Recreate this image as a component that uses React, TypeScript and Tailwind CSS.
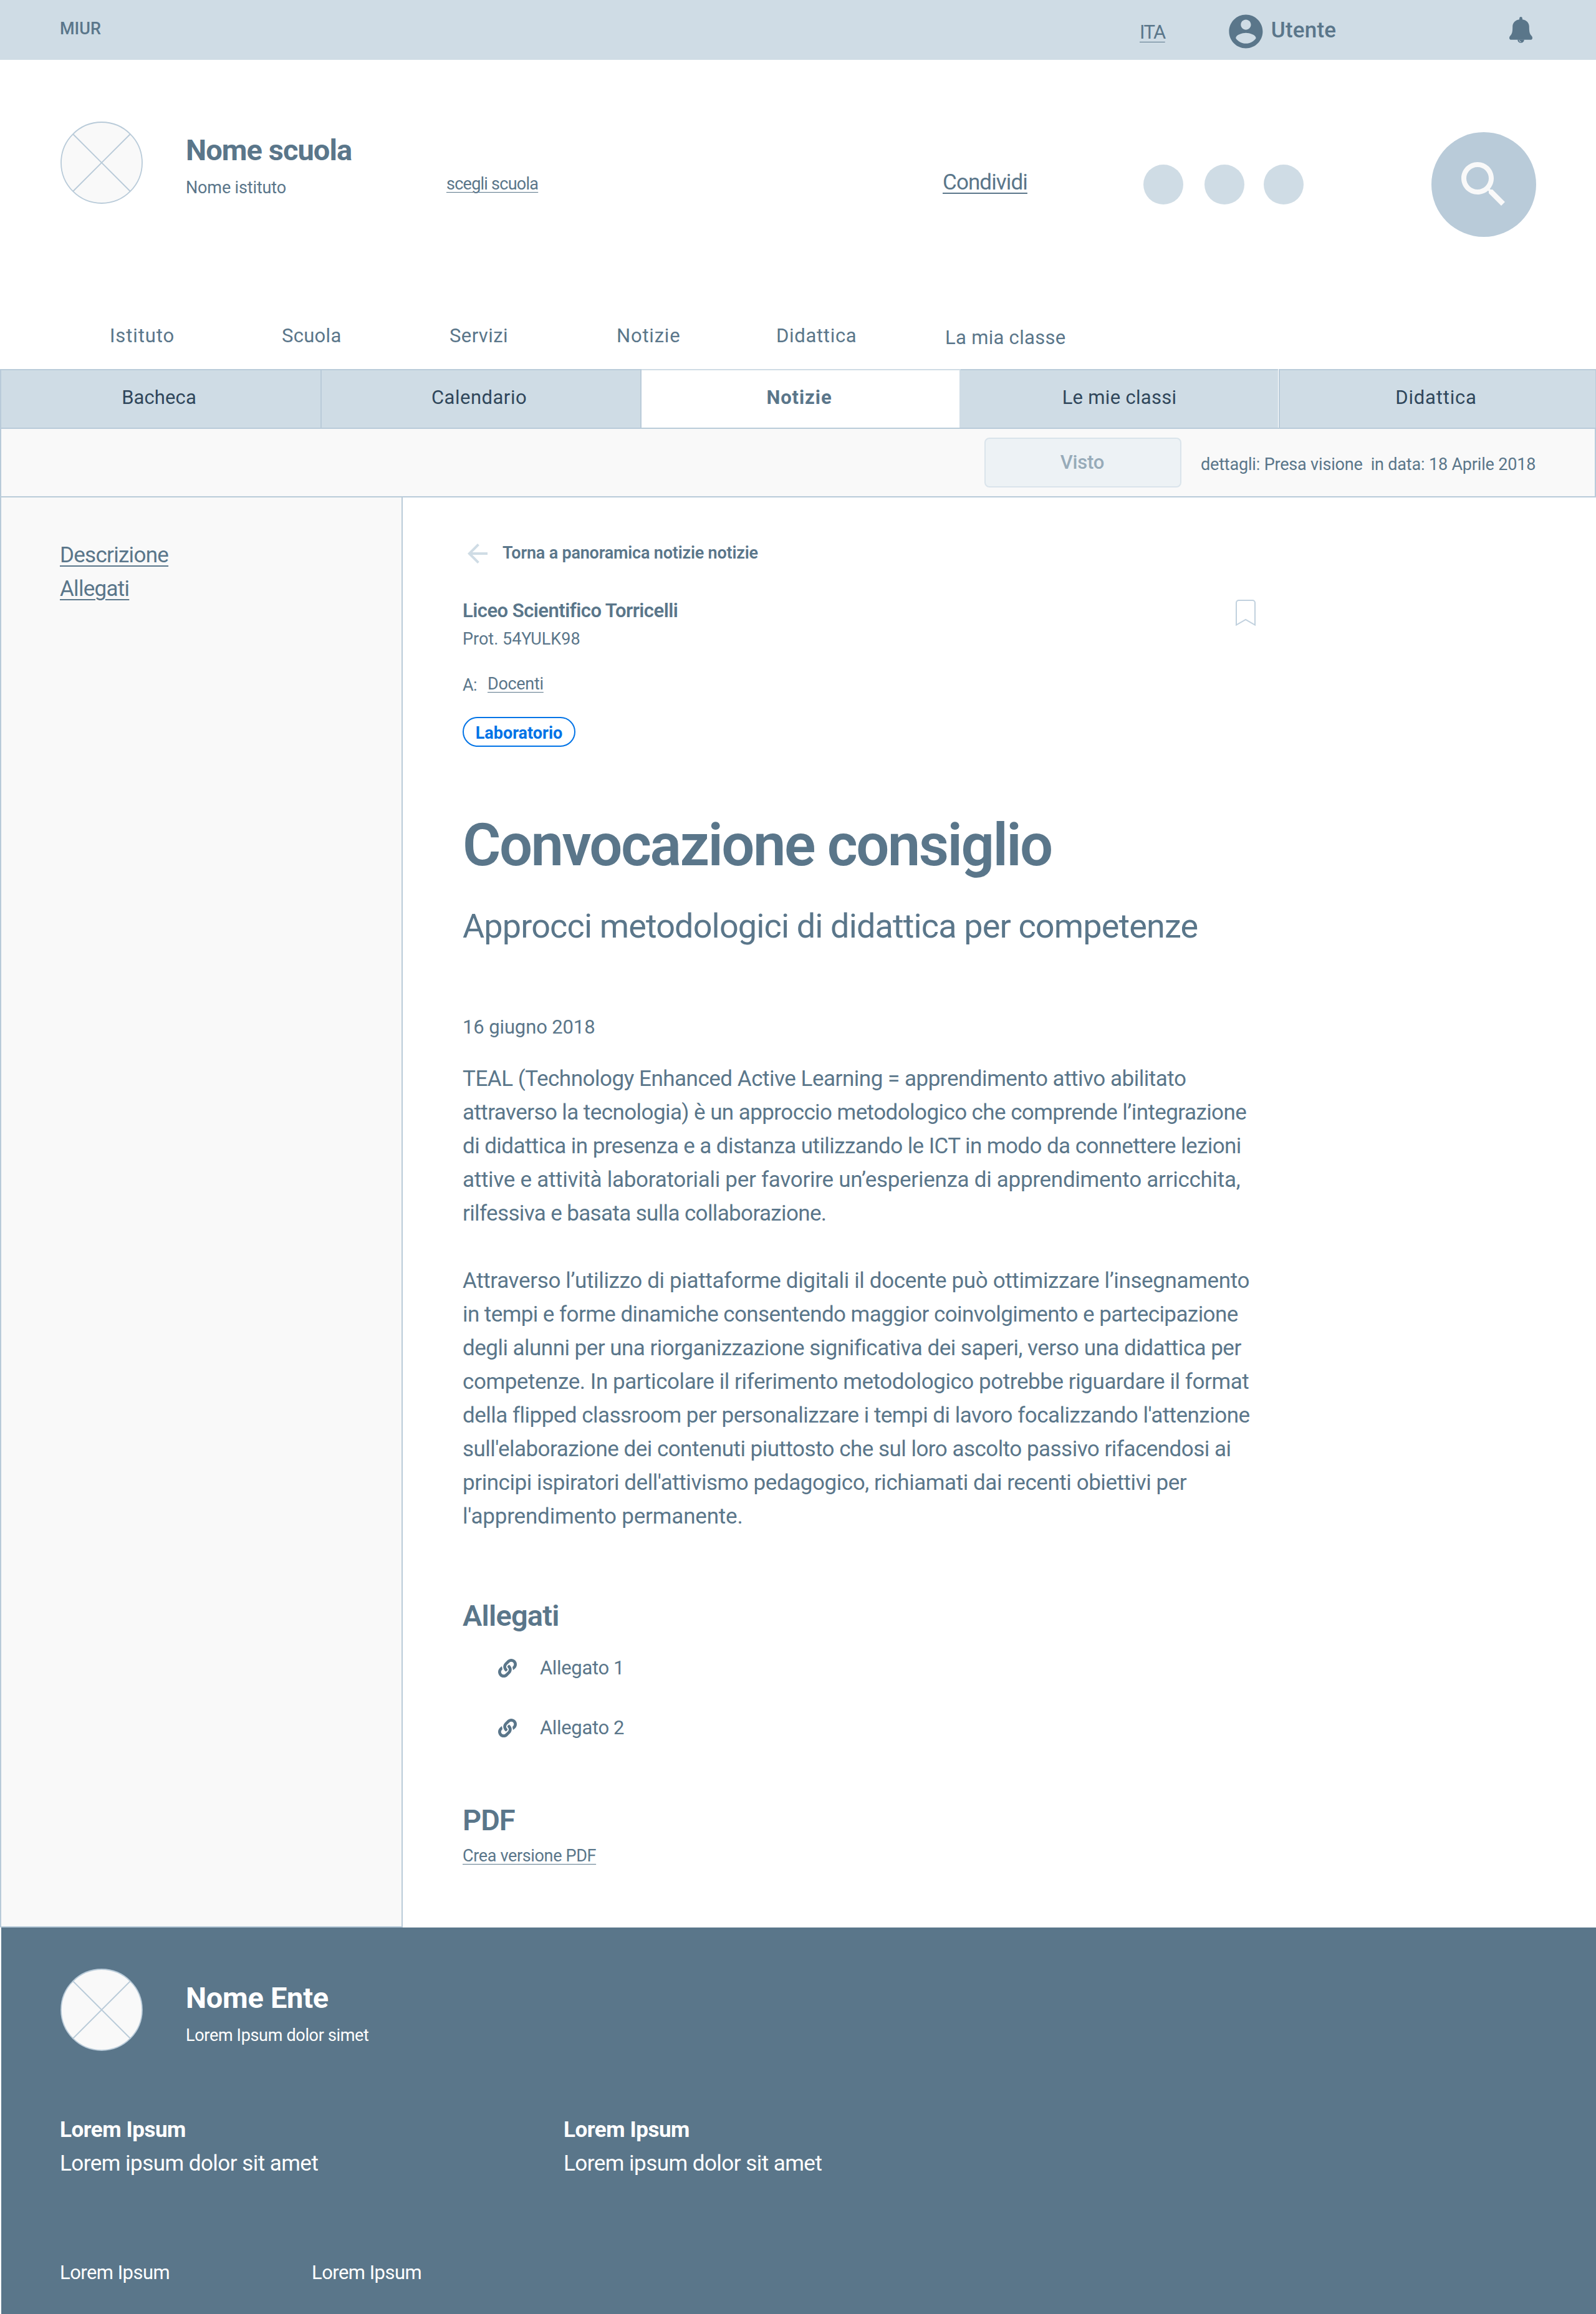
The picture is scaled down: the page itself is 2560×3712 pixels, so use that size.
import React from "react";
import { FaLink } from "react-icons/fa";

const ROBOTO = "font-['Roboto',sans-serif]";

function Placeholder() {
  return (
    <svg className="block h-[132px] w-[132px] shrink-0" viewBox="0 0 132 132" fill="none" stroke="#b9cbd9" strokeWidth="1.8">
      <circle cx="66" cy="66" r="65" fill="#f9f9f9" />
      <path d="M20 20L112 112M112 20L20 112" />
    </svg>
  );
}

function AccountIcon() {
  return (
    <svg className="block h-[64.8px] w-[64.8px] shrink-0" viewBox="0 0 24 24" fill="#5a768a">
      <path d="M12 2C6.48 2 2 6.48 2 12s4.48 10 10 10 10-4.48 10-10S17.52 2 12 2zm0 3c1.66 0 3 1.34 3 3s-1.34 3-3 3-3-1.34-3-3 1.34-3 3-3zm0 14.2c-2.5 0-4.71-1.28-6-3.22.03-1.99 4-3.08 6-3.08 1.99 0 5.97 1.09 6 3.08-1.29 1.94-3.5 3.22-6 3.22z" />
    </svg>
  );
}

function BellIcon() {
  return (
    <svg className="block h-[42px] w-[37px] shrink-0" viewBox="0 0 37 42" fill="#5a768a">
      <path d="M18.5 0c-1.500 0-2.400 1.300-2.400 2.800v1.500C9.500 5.300 5.200 9.800 5.200 15.500c0 8.500-.8 11.500-3.200 14.200C.7 31.200 0 32.400 0 33.900c0 1.700 1.200 2.900 2.800 2.900h31.400c1.600 0 2.800-1.200 2.800-2.900 0-1.500-.7-2.700-2-4.200-2.400-2.700-3.200-5.700-3.200-14.200 0-5.700-4.300-10.200-10.900-11.200V2.800C20.900 1.300 20 0 18.500 0z" />
      <path d="M13.200 36.500a5.300 5.300 0 0 0 10.600 0z" />
      <path d="M16 37.500a2.600 2.600 0 0 0 2.600 2.500" fill="none" stroke="#cfdce5" strokeWidth="1" />
    </svg>
  );
}

function SearchIcon() {
  return (
    <svg className="block h-24 w-24" viewBox="0 0 24 24" fill="#f9f9f9">
      <path d="M15.5 14h-.79l-.28-.27C15.41 12.59 16 11.11 16 9.5 16 5.91 13.09 3 9.5 3S3 5.91 3 9.5 5.91 16 9.5 16c1.61 0 3.09-.59 4.23-1.57l.27.28v.79l5 4.99L20.490 19l-4.990-5zm-6 0C7.010 14 5 11.990 5 9.500S7.010 5 9.500 5 14 7.010 14 9.500 11.990 14 9.500 14z" />
    </svg>
  );
}

function ArrowIcon() {
  return (
    <svg className="block h-12 w-12 shrink-0" viewBox="0 0 24 24" fill="#cfdce5">
      <path d="M20 11H7.830l5.590-5.590L12 4l-8 8 8 8 1.410-1.410L7.830 13H20v-2z" />
    </svg>
  );
}

function BookmarkIcon() {
  return (
    <svg className="mt-[5px] block h-[43px] w-8 shrink-0" viewBox="0 0 32 43" fill="none" stroke="#c1d1de" strokeWidth="2">
      <path d="M1 40.500V5a4 4 0 0 1 4-4h22a4 4 0 0 1 4 4v35.500L16 32z" />
    </svg>
  );
}

const navItems = [
  { label: "Istituto", cls: "w-[276px] tracking-[0.9px]" },
  { label: "Scuola", cls: "w-[269px] tracking-[0.3px]" },
  { label: "Servizi", cls: "w-[268px] tracking-[0.4px]" },
  { label: "Notizie", cls: "w-[256px] tracking-[0.8px]" },
  { label: "Didattica", cls: "w-[271px] tracking-[0.7px]" },
  { label: "La mia classe", cls: "mt-[3px] tracking-[0.3px]" },
];

const tabs = [
  { label: "Bacheca", cls: "w-[516px] border-x-2 border-[#b9cbd9] bg-[#cfdce5] text-[#30475b] pr-[6px] tracking-[0.1px]" },
  { label: "Calendario", cls: "w-[513px] border-r-2 border-[#b9cbd9] bg-[#cfdce5] text-[#30475b] pr-[6px] tracking-[0.5px]" },
  { label: "Notizie", cls: "w-[512px] border-r-2 border-[#cfdce5] bg-white font-bold text-[#5a768a] pr-[4px] tracking-[0.9px]" },
  { label: "Le mie classi", cls: "mr-px w-[509px] border-[#b9cbd9] bg-[#cfdce5] text-[#30475b] tracking-[0.3px]" },
  { label: "Didattica", cls: "w-[509px] border-l-2 border-r border-[#b9cbd9] bg-[#cfdce5] text-[#30475b] pr-[5px] tracking-[0.8px]" },
];

type Line = { text: string; cls: string };

const paragraphOne: Line[] = [
  { text: "TEAL (Technology Enhanced Active Learning = apprendimento attivo abilitato", cls: "tracking-[-0.480px]" },
  { text: "attraverso la tecnologia) è un approccio metodologico che comprende l’integrazione", cls: "tracking-[-0.580px]" },
  { text: "di didattica in presenza e a distanza utilizzando le ICT in modo da connettere lezioni", cls: "tracking-[-0.580px]" },
  { text: "attive e attività laboratoriali per favorire un’esperienza di apprendimento arricchita,", cls: "tracking-[-0.280px]" },
  { text: "rilfessiva e basata sulla collaborazione.", cls: "tracking-[-0.640px]" },
];

const paragraphTwo: Line[] = [
  { text: "Attraverso l’utilizzo di piattaforme digitali il docente può ottimizzare l’insegnamento", cls: "tracking-[-0.360px]" },
  { text: "in tempi e forme dinamiche consentendo maggior coinvolgimento e partecipazione", cls: "tracking-[-0.580px]" },
  { text: "degli alunni per una riorganizzazione significativa dei saperi, verso una didattica per", cls: "tracking-[-0.520px]" },
  { text: "competenze. In particolare il riferimento metodologico potrebbe riguardare il format", cls: "tracking-[-0.440px]" },
  { text: "della flipped classroom per personalizzare i tempi di lavoro focalizzando l'attenzione", cls: "tracking-[-0.520px]" },
  { text: "sull'elaborazione dei contenuti piuttosto che sul loro ascolto passivo rifacendosi ai", cls: "tracking-[-0.520px]" },
  { text: "principi ispiratori dell'attivismo pedagogico, richiamati dai recenti obiettivi per", cls: "tracking-[-0.440px]" },
  { text: "l'apprendimento permanente.", cls: "tracking-[-0.180px]" },
];

function Lines({ lines }: { lines: Line[] }) {
  return (
    <>
      {lines.map((line) => (
        <span key={line.text} className={`block whitespace-nowrap ${line.cls}`}>
          {line.text}
        </span>
      ))}
    </>
  );
}

function Attachment({ label }: { label: string }) {
  return (
    <div className="flex items-start pl-[57px]">
      <FaLink className="mt-2 block h-[30px] w-[30px] shrink-0" />
      <a className="ml-[37px] text-[31px] leading-[45px] tracking-[-0.350px]">{label}</a>
    </div>
  );
}

function TopBar() {
  return (
    <div className="flex h-24 items-start bg-[#cfdce5] pl-24">
      <span className="mt-[26px] w-[1732px] text-[27px] leading-[40px] font-medium">MIUR</span>
      <a className="mt-[29px] w-[138px] text-[31px] leading-[45px] tracking-[-1.600px] underline decoration-1 underline-offset-[5px]">ITA</a>
      <div className="flex w-[455px] items-start">
        <div className="mt-[17.600px]">
          <AccountIcon />
        </div>
        <span className="mt-[22px] ml-[8px] text-[35px] leading-[54px] font-medium tracking-[0.2px]">Utente</span>
      </div>
      <div className="mt-[27px]">
        <BellIcon />
      </div>
    </div>
  );
}

function Header() {
  return (
    <header className="h-[496px] bg-white">
      <div className="flex h-[420px] items-start pl-[97px]">
        <div className="mt-[99px]">
          <Placeholder />
        </div>
        <div className="ml-[69px] w-[418px] pt-[115px]">
          <h2 className="text-[47px] leading-[60px] font-bold tracking-[-0.950px]">Nome scuola</h2>
          <p className="mt-[10px] text-[27px] leading-[40px] tracking-[-0.150px]">Nome istituto</p>
        </div>
        <a className="mt-[179px] w-[796px] text-[27px] leading-[40px] tracking-[-0.750px] underline decoration-1 underline-offset-[4px]">scegli scuola</a>
        <a className="mt-[170px] w-[322px] text-[35px] leading-[54px] tracking-[-0.900px] underline decoration-2 underline-offset-[5px]">Condividi</a>
        <div className="mt-[168px] flex w-[462px]">
          <div className="h-16 w-16 rounded-full bg-[#cfdce5]" />
          <div className="ml-[34px] h-16 w-16 rounded-full bg-[#cfdce5]" />
          <div className="ml-[31px] h-16 w-16 rounded-full bg-[#cfdce5]" />
        </div>
        <div className="mt-[116px] flex h-[168px] w-[168px] items-center justify-center rounded-full bg-[#b9cbd9]">
          <SearchIcon />
        </div>
      </div>
      <nav className="flex items-start pl-[176px] text-[31px] leading-[45px]">
        {navItems.map((n) => (
          <a key={n.label} className={n.cls}>
            {n.label}
          </a>
        ))}
      </nav>
    </header>
  );
}

function Tabs() {
  return (
    <div className="flex h-[96px] border-b-2 border-[#b9cbd9]">
      {tabs.map((t) => (
        <div key={t.label} className={`flex h-[94px] justify-center border-t-2 pt-[21px] text-[31px] leading-[45px] ${t.cls}`}>
          {t.label}
        </div>
      ))}
    </div>
  );
}

function StatusBar() {
  return (
    <div className="flex h-[110px] items-start justify-end border-x-2 border-b-2 border-[#b9cbd9] bg-[#f9f9f9] pr-[92px]">
      <div className="mt-[14px] flex h-20 w-[316px] justify-center rounded-lg border-2 border-[#dae4eb] bg-[#edf2f5] pt-[15px] pr-[2px] text-[31px] leading-[45px] font-medium tracking-[-0.200px] text-[#97abb9]">
        Visto
      </div>
      <p className="mt-[37px] ml-[31px] w-[540px] text-[27px] leading-[40px] tracking-[-0.180px] whitespace-pre">dettagli: Presa visione  in data: 18 Aprile 2018</p>
    </div>
  );
}

function Article() {
  return (
    <main className="w-[1368px] pt-[66px] pl-24">
      <div className="flex h-12 items-start">
        <ArrowIcon />
        <a className="mt-[3px] ml-4 text-[27px] leading-[40px] font-semibold tracking-[-0.200px] whitespace-nowrap">Torna a panoramica notizie notizie</a>
      </div>
      <div className="mt-[45px] flex h-[45px] items-start justify-between">
        <span className="text-[31px] leading-[45px] font-semibold tracking-[-0.520px]">Liceo Scientifico Torricelli</span>
        <BookmarkIcon />
      </div>
      <p className="mt-[3px] text-[27px] leading-[40px]">Prot. 54YULK98</p>
      <div className="mt-8 flex h-[42px] items-start text-[27px] leading-[40px]">
        <span className="mt-[2px] w-10 tracking-[-0.500px]">A:</span>
        <a className="tracking-[-0.300px] underline decoration-1 underline-offset-[4px]">Docenti</a>
      </div>
      <div className="mt-[31px] flex h-12 w-[181px] justify-center rounded-full border-2 border-[#0073e6] pt-[4px] text-[27px] leading-[40px] font-bold text-[#0073e6]">
        Laboratorio
      </div>
      <h1 className="mt-[103px] text-[94px] leading-[110px] font-semibold tracking-[-2.550px] whitespace-nowrap">Convocazione consiglio</h1>
      <p className="mt-[39px] text-[54px] leading-[71px] tracking-[-0.870px] whitespace-nowrap">Approcci metodologici di didattica per competenze</p>
      <p className="mt-[104px] text-[31px] leading-[45px] tracking-[-0.120px]">16 giugno 2018</p>
      <div className="mt-[34px] text-[35px] leading-[54px]">
        <p>
          <Lines lines={paragraphOne} />
        </p>
        <p className="mt-[54px]">
          <Lines lines={paragraphTwo} />
        </p>
      </div>
      <h3 className="mt-[102px] text-[47px] leading-[60px] font-semibold tracking-[-0.800px]">Allegati</h3>
      <div className="mt-[31px] flex flex-col gap-[51px]">
        <Attachment label="Allegato 1" />
        <Attachment label="Allegato 2" />
      </div>
      <h3 className="mt-24 text-[47px] leading-[60px] font-semibold tracking-[-1px]">PDF</h3>
      <a className="mt-[7px] block text-[27px] leading-[40px] tracking-[-0.350px] underline decoration-1 underline-offset-[4px]">Crea versione PDF</a>
    </main>
  );
}

function Footer() {
  return (
    <footer className="ml-[2px] h-[620px] bg-[#5a768a] pl-[94px] text-white">
      <div className="flex items-start pt-[66px] pl-px">
        <Placeholder />
        <div className="ml-[69px] pt-[17px]">
          <h2 className="text-[47px] leading-[60px] font-bold tracking-[-0.300px]">Nome Ente</h2>
          <p className="mt-[10px] text-[27px] leading-[40px] tracking-[-0.320px]">Lorem Ipsum dolor simet</p>
        </div>
      </div>
      <div className="mt-[100px] flex text-[35px] leading-[54px]">
        {[0, 1].map((i) => (
          <div key={i} className="w-[808px]">
            <h4 className="font-bold tracking-[-0.450px]">Lorem Ipsum</h4>
            <p className="tracking-[-0.540px]">Lorem ipsum dolor sit amet</p>
          </div>
        ))}
      </div>
      <div className="mt-[125px] flex text-[31px] leading-[45px] tracking-[-0.540px]">
        <span className="w-[404px]">Lorem Ipsum</span>
        <span>Lorem Ipsum</span>
      </div>
    </footer>
  );
}

export default function App() {
  return (
    <div className={`h-[3712px] w-[2560px] overflow-hidden bg-white text-[#5a768a] ${ROBOTO}`}>
      <TopBar />
      <Header />
      <Tabs />
      <StatusBar />
      <div className="flex h-[2294px]">
        <aside className="w-[646px] border-x-2 border-b-2 border-[#b9cbd9] bg-[#f9f9f9] pt-[66px] pl-[94px] text-[35px] leading-[54px] tracking-[-0.720px]">
          <a className="block underline decoration-2 underline-offset-[5px]">Descrizione</a>
          <a className="block underline decoration-2 underline-offset-[5px]">Allegati</a>
        </aside>
        <Article />
      </div>
      <Footer />
    </div>
  );
}
